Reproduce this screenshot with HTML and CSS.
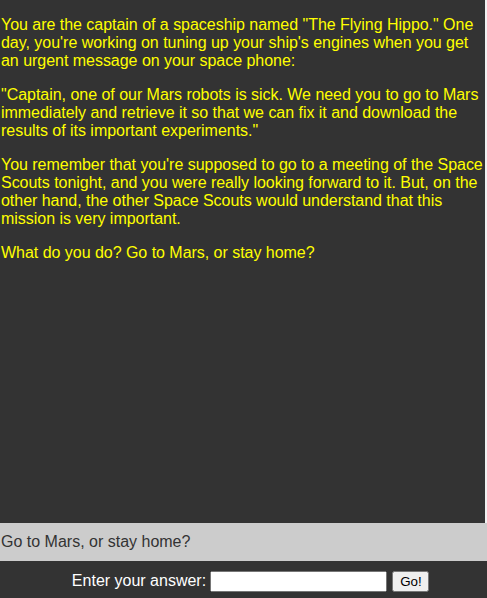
FILE: index.html
```html
<!DOCTYPE html>
<html>
<head>
<meta charset="utf-8">
<link rel="stylesheet" href="styles.css">
</head>
<body>
<div class="page">
  <div class="story">
    <p>You are the captain of a spaceship named "The Flying Hippo." One day, you're working on tuning up your ship's engines when you get an urgent message on your space phone:</p>
    <p>"Captain, one of our Mars robots is sick. We need you to go to Mars immediately and retrieve it so that we can fix it and download the results of its important experiments."</p>
    <p>You remember that you're supposed to go to a meeting of the Space Scouts tonight, and you were really looking forward to it. But, on the other hand, the other Space Scouts would understand that this mission is very important.</p>
    <p>What do you do? Go to Mars, or stay home?</p>
  </div>
  <div class="question">Go to Mars, or stay home?</div>
  <form class="answer">
    <label class="answer-label">Enter your answer:</label>
    <input class="answer-input" type="text">
    <button class="answer-btn" type="button">Go!</button>
  </form>
</div>
</body>
</html>
```
FILE: styles.css
```css
html, body {
  margin: 0;
  padding: 0;
  height: 100%;
  background: #f0f0f0;
}
.page {
  display: flex;
  flex-direction: column;
  height: 598px;
  font-family: "Liberation Sans", Arial, sans-serif;
  font-size: 16px;
}
.story {
  flex: 1;
  background: #333333;
  color: #ffff00;
  margin-right: 2px;
  padding: 0 0 0 1px;
  letter-spacing: -0.03px;
  overflow: hidden;
}
.story p {
  margin: 16px 0;
}
.question {
  height: 38px;
  background: #cccccc;
  color: #333333;
  display: flex;
  align-items: center;
  padding-left: 1px;
}
.answer {
  margin: 0;
  height: 37px;
  box-sizing: border-box;
  background: #333333;
  display: flex;
  align-items: center;
  justify-content: center;
  padding: 3px 0 0 14px;
}
.answer-label {
  color: #ffffff;
  margin-right: 4px;
}
.answer-input {
  box-sizing: border-box;
  width: 177px;
  height: 21px;
  margin: 0 5px 0 0;
}
.answer-btn {
  margin: 0;
  width: 37px;
}
```
